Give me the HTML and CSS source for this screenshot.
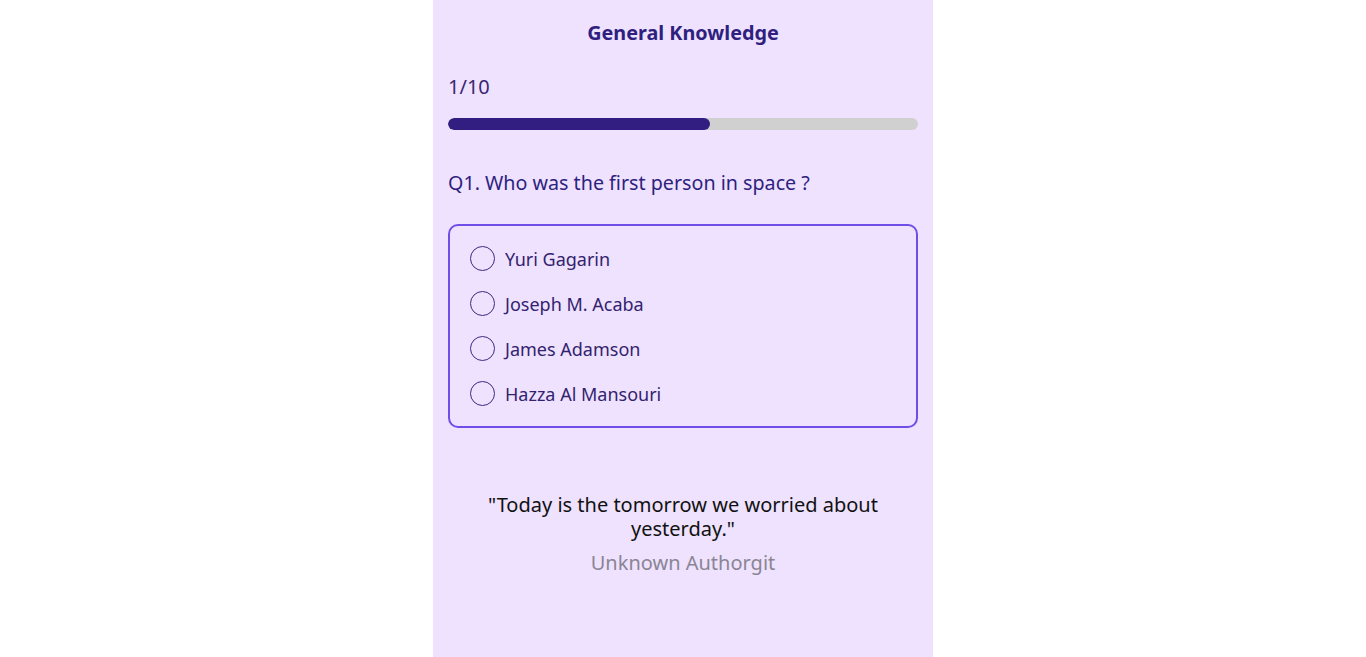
FILE: index.html
```html
<!DOCTYPE html>
<html lang="en">
<head>
<meta charset="utf-8">
<title>Quiz</title>
<link rel="stylesheet" href="styles.css">
</head>
<body>
<main class="quiz">
  <h1 class="quiz-title">General Knowledge</h1>
  <div class="counter">1/10</div>
  <div class="progress"><div class="progress-fill" style="width: 55.7%"></div></div>
  <p class="question">Q1. Who was the first person in space ?</p>
  <div class="options">
    <label class="option"><span class="radio"></span><span>Yuri Gagarin</span></label>
    <label class="option"><span class="radio"></span><span>Joseph M. Acaba</span></label>
    <label class="option"><span class="radio"></span><span>James Adamson</span></label>
    <label class="option"><span class="radio"></span><span>Hazza Al Mansouri</span></label>
  </div>
  <div class="quote">
    <p class="quote-text">"Today is the tomorrow we worried about yesterday."</p>
    <p class="quote-author">Unknown Authorgit</p>
  </div>
</main>
</body>
</html>
```

FILE: styles.css
```css
* { box-sizing: border-box; }
html, body { margin: 0; padding: 0; background: #ffffff; }
body { font-family: "Noto Sans", "Open Sans", sans-serif; }
.quiz {
  width: 500px;
  min-height: 657px;
  margin: 0 auto;
  background: #eee2fe;
  padding: 20px 15px 15px;
  display: flex;
  flex-direction: column;
}
.quiz-title {
  margin: 0;
  text-align: center;
  font-size: 19.8px;
  line-height: 26px;
  font-weight: 700;
  color: #2f1f7e;
}
.counter {
  margin-top: 28px;
  font-size: 20px;
  line-height: 26px;
  color: #3a2770;
}
.progress {
  margin-top: 18px;
  height: 12px;
  border-radius: 6px;
  background: #d0d0d0;
  overflow: hidden;
}
.progress-fill {
  height: 100%;
  border-radius: 6px;
  background: #321e80;
}
.question {
  margin: 40px 0 0;
  font-size: 19.7px;
  line-height: 26px;
  color: #2f1f7e;
}
.options {
  margin-top: 28px;
  border: 2px solid #6f4ee8;
  border-radius: 10px;
  padding: 10px 20px;
  display: flex;
  flex-direction: column;
}
.option {
  height: 45px;
  display: flex;
  align-items: center;
  gap: 10px;
  font-size: 18px;
  color: #33226f;
}
.radio {
  width: 25px;
  height: 25px;
  border: 1.5px solid #3b2a80;
  border-radius: 50%;
  flex: none;
}
.quote {
  margin-top: 65px;
  text-align: center;
  padding: 0 40px;
}
.quote-text {
  margin: 0;
  font-size: 20px;
  line-height: 24px;
  color: #111111;
}
.quote-author {
  margin: 10px 0 0;
  font-size: 20px;
  line-height: 24px;
  color: #8a8593;
}
```
